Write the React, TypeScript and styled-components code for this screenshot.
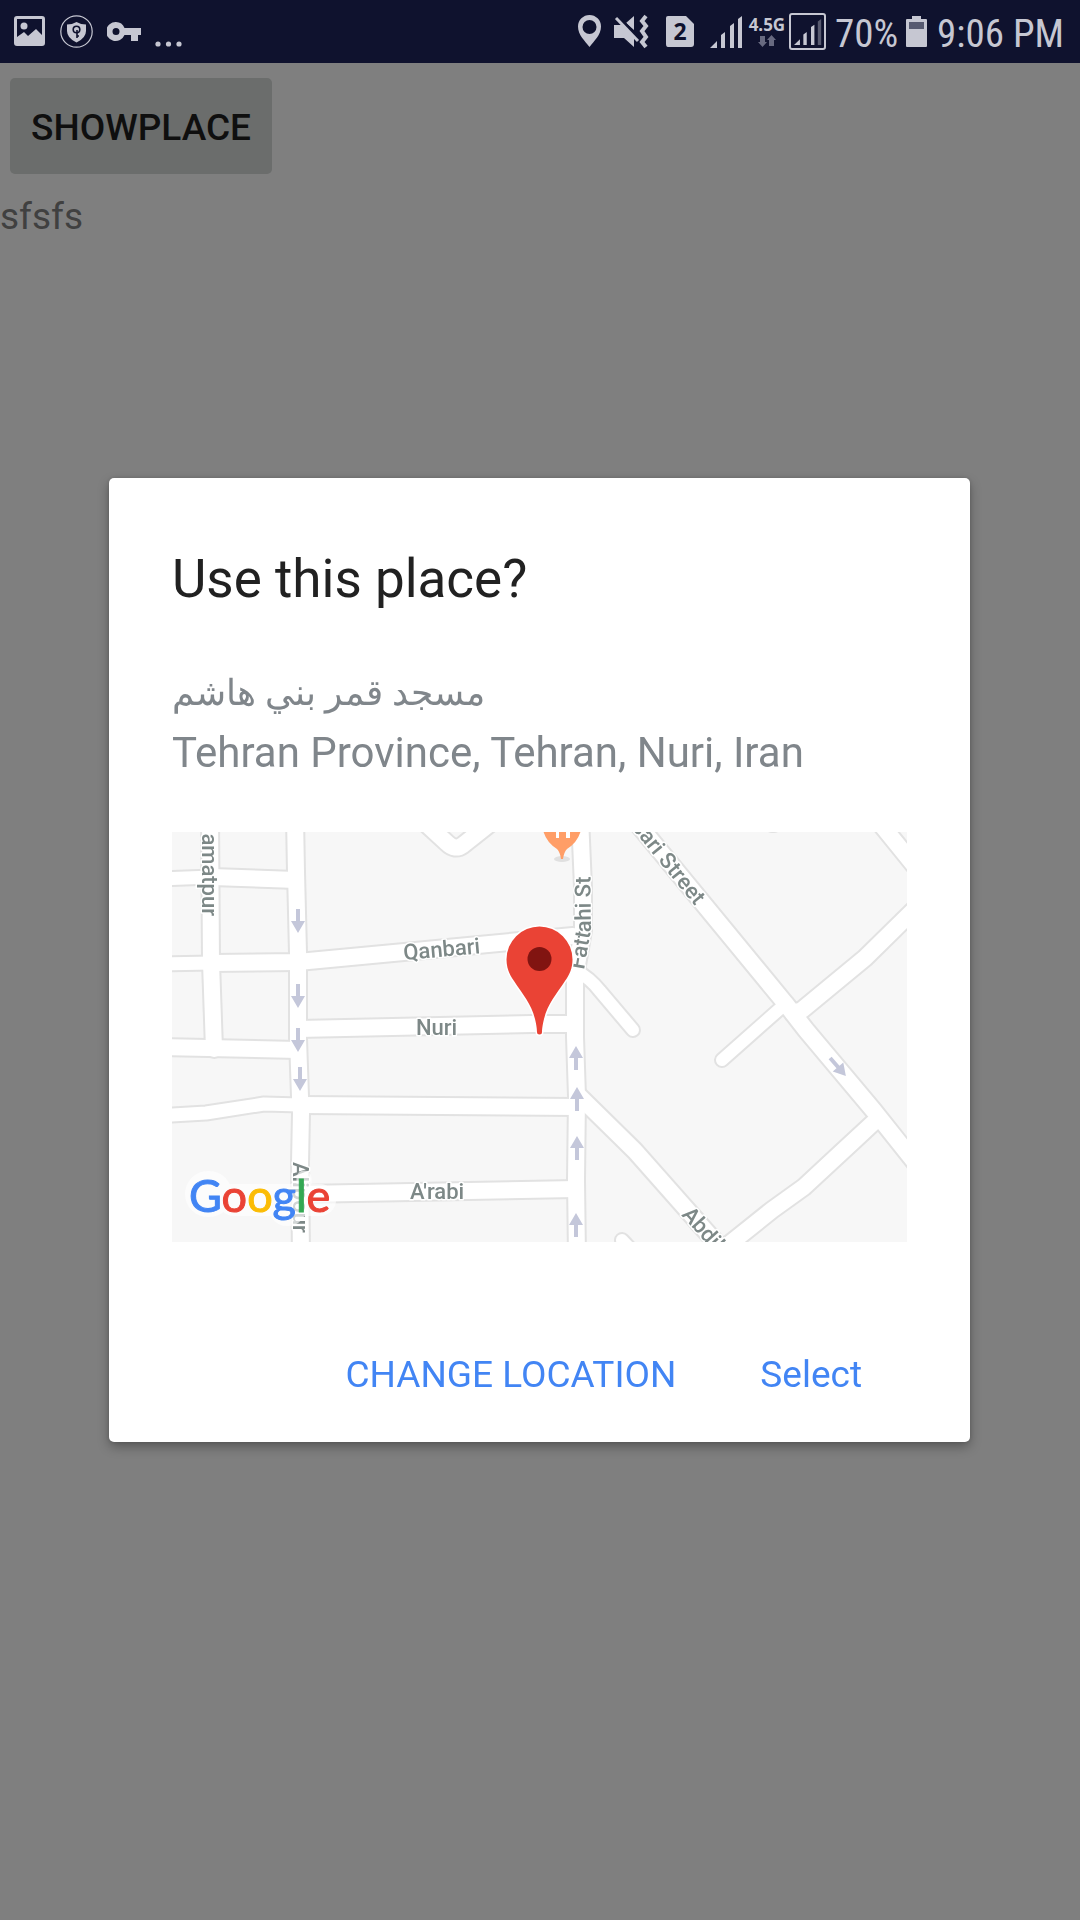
import React from "react";
import styled, { createGlobalStyle } from "styled-components";

const GlobalStyle = createGlobalStyle`
  *, *::before, *::after { box-sizing: border-box; }
  body {
    margin: 0;
    background: #7f7f7f;
    font-family: Roboto, "Noto Sans", sans-serif;
  }
`;

const Screen = styled.div`
  min-height: 100vh;
  display: flex;
  flex-direction: column;
  background: #7f7f7f;
`;

const StatusBar = styled.header`
  height: 63px;
  padding: 0 16px 0 14px;
  display: flex;
  align-items: center;
  justify-content: space-between;
  background: #0f122e;
  color: #c6c7d2;
`;

const StatusGroup = styled.div<{ $gap?: number }>`
  display: flex;
  align-items: center;
  gap: ${(p) => p.$gap ?? 0}px;
`;

const StatusIcon = styled.svg`
  display: block;
  flex: none;
  height: 63px;
  fill: #c6c7d2;
`;

const StatusText = styled.span`
  padding-top: 4px;
  font-family: "Roboto Condensed", Roboto, sans-serif;
  font-size: 39px;
  line-height: 46px;
  white-space: nowrap;
`;

const Network = styled.div`
  width: 38px;
  display: flex;
  flex-direction: column;
  align-items: center;
  font: 700 17px/20px "Noto Sans", sans-serif;
`;

const Content = styled.main`
  display: flex;
  flex-direction: column;
  align-items: flex-start;
  gap: 21px;
  padding-top: 15px;
`;

const PlaceButton = styled.button`
  margin-left: 10px;
  height: 96px;
  padding: 3px 21px 0;
  border: 0;
  border-radius: 5px;
  background: #6b6d6c;
  color: #0f0f0f;
  font: 500 37px/44px Roboto, sans-serif;
`;

const Note = styled.p`
  margin: 0;
  color: #404040;
  font-size: 37px;
  line-height: 44px;
`;

const Overlay = styled.div`
  position: fixed;
  inset: 0;
  display: flex;
  align-items: center;
  padding: 0 110px 0 109px;
`;

const Dialog = styled.section`
  flex: 1;
  padding: 70px 63px 20px;
  border-radius: 5px;
  background: #fff;
  box-shadow: 0 5px 12px rgba(0, 0, 0, 0.3), 0 0 4px rgba(0, 0, 0, 0.15);
`;

const Title = styled.h1`
  margin: 0 0 48px;
  color: #212121;
  font-size: 53px;
  font-weight: 400;
  line-height: 62px;
`;

const Address = styled.p`
  margin: 0;
  height: 63px;
  color: #80868b;
  font-size: 42px;
  line-height: 63px;
  white-space: nowrap;
`;

const PlaceName = styled(Address)`
  font-size: 36px;
  line-height: 70px;
`;

const MapView = styled.svg`
  display: block;
  width: 100%;
  margin-top: 48px;
  background: #f7f7f7;
`;

const RoadGroup = styled.g`
  fill: none;
  stroke-linejoin: round;
  stroke-linecap: round;
`;

const StreetName = styled.text`
  font: 500 22px Roboto, sans-serif;
  fill: #7d8887;
  stroke: #fff;
  stroke-width: 3px;
  stroke-linejoin: round;
  paint-order: stroke;
`;

const Wordmark = styled.text`
  font: 400 45px Lato, sans-serif;
`;

const Actions = styled.div`
  display: flex;
  justify-content: flex-end;
  margin-top: 86px;
  padding-right: 3px;
`;

const ActionButton = styled.button`
  height: 94px;
  padding: 0 42px;
  border: 0;
  background: transparent;
  color: #4285f4;
  font: 400 37px/44px Roboto, sans-serif;
`;

const roads: { d: string; w: number }[] = [
  { d: "M38 -15 L39 130 L42 217", w: 18 },
  { d: "M123 -15 L124 40 L126 121 L126 206 L128 265 L129 281 L128 331 L129 425", w: 18 },
  { d: "M-15 47 L40 45", w: 15 },
  { d: "M40 45 L124 48", w: 18 },
  { d: "M-15 132 L40 131", w: 15 },
  { d: "M40 131 L126 130 L401 104", w: 18 },
  { d: "M-15 215 L126 218", w: 18 },
  { d: "M126 197 L360 192 L403 192", w: 18 },
  { d: "M-15 284 L34 281 L92 272 L128 273", w: 15 },
  { d: "M128 273 L405 275", w: 18 },
  { d: "M128 362 L404 357", w: 18 },
  { d: "M408 -15 L411 55 L411 98 L403 145 L403 205 L405 265 L404 348 L405 425", w: 18 },
  { d: "M403 138 Q418 146 428 159 L461 198", w: 14 },
  { d: "M460 -15 L613 171 L634 198 L702 279 L745 333", w: 18 },
  { d: "M750 70 L693 126 L630 178 L621 181", w: 18 },
  { d: "M611 174 L550 228", w: 14 },
  { d: "M701 291 L632 355 L600 378 L550 418", w: 18 },
  { d: "M405 262 L463 319 L555 423", w: 18 },
  { d: "M250 -12 L275 11 Q283 19 291 13 L320 -10", w: 18 },
  { d: "M703 -15 L750 43", w: 18 },
  { d: "M450 408 L465 424", w: 14 },
  { d: "M600 -7 L602 -7", w: 14 },
];

const arrows = [
  [126, 89, 0],
  [126, 164, 0],
  [126, 208, 0],
  [128, 247, 0],
  [404, 226, 180],
  [405, 267, 180],
  [405, 316, 180],
  [404, 393, 180],
  [666, 235, -41],
];

function StreetMap() {
  return (
    <MapView viewBox="0 0 735 410" role="img" aria-label="Map of the selected place">
      <defs>
        <path id="fattahi" d="M412 138 L419 98 L418 20" />
      </defs>
      <RoadGroup stroke="#e2e2e2">
        {roads.map((r) => (
          <path key={r.d} d={r.d} strokeWidth={r.w + 2} />
        ))}
      </RoadGroup>
      <RoadGroup stroke="#fff">
        {roads.map((r) => (
          <path key={r.d} d={r.d} strokeWidth={r.w - 2} />
        ))}
      </RoadGroup>
      {arrows.map(([x, y, angle]) => (
        <path
          key={`${x}-${y}`}
          d="M-2 -12 H2 V0 H7 L0 12 L-7 0 H-2 Z"
          fill="#c4c7da"
          transform={`translate(${x} ${y}) rotate(${angle})`}
        />
      ))}

      <StreetName transform="translate(30 84) rotate(90)" textAnchor="end">amatpur</StreetName>
      <StreetName transform="translate(232 128) rotate(-5)">Qanbari</StreetName>
      <StreetName x="244" y="203">Nuri</StreetName>
      <StreetName x="238" y="367">A'rabi</StreetName>
      <StreetName transform="translate(121 330) rotate(90)">Alipour</StreetName>
      <StreetName>
        <textPath href="#fattahi">Fattahi St</textPath>
      </StreetName>
      <StreetName transform="translate(523 74) rotate(51)" textAnchor="end">sari Street</StreetName>
      <StreetName transform="translate(509 383) rotate(48)">Abdili</StreetName>

      <ellipse cx="390" cy="27" rx="8" ry="3" fill="#e0e0e0" />
      <path d="M371 -2 Q374 10 385 17 Q388 20 389 27 H391 Q392 20 395 17 Q406 10 409 -2 Z" fill="#ff9e67" />
      <path d="M384 0 H387 V6 H384 Z M394 0 H398 V6 H394 Z" fill="#fff" />

      <path
        d="M334.500 127.500 A33 33 0 0 1 400.500 127.500 C400.500 136 397.500 143 393 149 C384 163 376 171 372 187 C370.500 193 370 198 370 200 A2.500 2.500 0 0 1 365 200 C365 198 364.500 193 363 187 C359 171 351 163 342 149 C337.500 143 334.500 136 334.500 127.500 Z"
        fill="#ea4335"
        stroke="#fff"
        strokeWidth="3"
        paintOrder="stroke"
      />
      <circle cx="367.500" cy="127" r="12" fill="#811411" />

      <g fill="none" stroke="#fff" strokeLinecap="round" opacity="0.65">
        <path d="M36 362 H37" strokeWidth="46" />
        <path d="M62 368 H148" strokeWidth="32" />
        <path d="M115 376 H116" strokeWidth="36" />
        <path d="M132 346 V376" strokeWidth="15" />
      </g>
      <Wordmark x="17" y="380">
        <tspan fill="#4285f4" stroke="#4285f4">G</tspan>
        <tspan fill="#ea4335" stroke="#ea4335">o</tspan>
        <tspan fill="#fbbc05" stroke="#fbbc05">o</tspan>
        <tspan fill="#4285f4" stroke="#4285f4">g</tspan>
        <tspan fill="#34a853" stroke="#34a853">l</tspan>
        <tspan fill="#ea4335" stroke="#ea4335">e</tspan>
      </Wordmark>
    </MapView>
  );
}

function SignalBars({ faded }: { faded?: boolean }) {
  return (
    <>
      <path d="M0 32 L7 25 V32 Z M11 32 V19 L15 16 V32 Z M20 32 V10 L24 7 V32 Z" />
      <path d="M28 32 V3 L32 0 V32 Z" opacity={faded ? 0.4 : 1} />
    </>
  );
}

function PhoneStatus() {
  return (
    <StatusBar>
      <StatusGroup $gap={14}>
        <StatusIcon width="32" viewBox="0 0 32 63">
          <path
            fillRule="evenodd"
            d="M3 16 H28 Q31 16 31 19 V43 Q31 46 28 46 H3 Q0 46 0 43 V19 Q0 16 3 16 Z M3 19 V37 L10 32 L14 36 L22 29 L28 35 V19 Z"
          />
          <circle cx="10" cy="26" r="3.500" />
        </StatusIcon>
        <StatusIcon width="33" viewBox="0 0 33 63">
          <circle cx="16.500" cy="31.500" r="15.700" fill="none" stroke="#c6c7d2" strokeWidth="1.200" />
          <path d="M16.500 22 Q21 24.500 26 24.500 V31 Q26 38 16.500 42.500 Q7 38 7 31 V24.500 Q12 24.500 16.500 22 Z" />
          <g fill="none" stroke="#0f122e" strokeWidth="1.600">
            <circle cx="16.500" cy="29.500" r="3.300" />
            <path d="M17 30 V38 M17 36 H19" />
          </g>
        </StatusIcon>
        <StatusIcon width="34" viewBox="0 0 34 63">
          <path
            fillRule="evenodd"
            d="M9 22 A9.500 9.500 0 0 1 17.500 28 H34 V35 H31 V41 H24 V35 H17.500 A9.500 9.500 0 1 1 9 22 Z M9 28 A3.500 3.500 0 1 0 9 35 A3.500 3.500 0 1 0 9 28 Z"
          />
        </StatusIcon>
        <StatusIcon width="27" viewBox="0 0 27 63">
          <circle cx="3" cy="44" r="2.600" />
          <circle cx="13.500" cy="44" r="2.600" />
          <circle cx="24" cy="44" r="2.600" />
        </StatusIcon>
      </StatusGroup>

      <StatusGroup>
        <StatusIcon width="30" viewBox="0 0 30 63">
          <path
            fillRule="evenodd"
            d="M14.500 15 A11.500 11.500 0 0 1 26 26.500 C26 35 19 41 14.500 47 C10 41 3 35 3 26.500 A11.500 11.500 0 0 1 14.500 15 Z M14.500 20 A7 7 0 1 0 14.500 34 A7 7 0 1 0 14.500 20 Z"
          />
        </StatusIcon>
        <StatusIcon width="50" viewBox="0 0 50 63">
          <path d="M9 25 H17 L29 37 V47 L19 38 H9 Z M29 16 V30 L21 23 Z" />
          <path d="M14 17 L33 38" fill="none" stroke="#0f122e" strokeWidth="3" />
          <path d="M11 18 L33 41" fill="none" stroke="#c6c7d2" strokeWidth="3" />
          <path
            d="M41 16 L37 21 L41 26 L37 31 L41 37 L37 42 L41 47"
            fill="none"
            stroke="#c6c7d2"
            strokeWidth="4"
          />
        </StatusIcon>
        <StatusIcon width="48" viewBox="0 0 48 63">
          <path d="M13 16 H31 L39 24 V44 Q39 47 36 47 H13 Q11 47 11 44 V18 Q11 16 13 16 Z" />
          <text x="25" y="40" textAnchor="middle" fontFamily="Noto Sans" fontWeight="700" fontSize="23" fill="#0f122e">
            2
          </text>
        </StatusIcon>
        <StatusIcon width="45" viewBox="0 0 45 63">
          <g transform="translate(7 16)">
            <SignalBars />
          </g>
        </StatusIcon>
        <Network>
          <span>4.5G</span>
          <svg width="20" height="13" viewBox="0 0 20 13" fill="#686a80">
            <path d="M3 1 H8 V7 H10 L5.500 12 L1 7 H3 Z M12 11 H17 V5 H19 L14.500 0 L10 5 H12 Z" />
          </svg>
        </Network>
        <StatusIcon width="49" viewBox="0 0 49 63">
          <rect x="4" y="14" width="35" height="35" rx="2" fill="none" stroke="#c6c7d2" strokeWidth="2" />
          <g transform="translate(8 19) scale(0.850 0.810)">
            <SignalBars faded />
          </g>
        </StatusIcon>
        <StatusText>70%</StatusText>
        <StatusIcon width="39" viewBox="0 0 39 63">
          <path d="M14 16 H23 V19 H28 Q29 19 29 20 V46 Q29 47 28 47 H9 Q8 47 8 46 V20 Q8 19 9 19 H14 Z" />
          <rect x="11" y="22" width="15" height="7" fill="#575a70" />
        </StatusIcon>
        <StatusText>9:06 PM</StatusText>
      </StatusGroup>
    </StatusBar>
  );
}

export default function App() {
  return (
    <>
      <GlobalStyle />
      <Screen>
        <PhoneStatus />
        <Content>
          <PlaceButton type="button">SHOWPLACE</PlaceButton>
          <Note>sfsfs</Note>
        </Content>
      </Screen>
      <Overlay>
        <Dialog role="dialog" aria-modal="true" aria-labelledby="dialog-title">
          <Title id="dialog-title">Use this place?</Title>
          <PlaceName lang="fa">مسجد قمر بني هاشم</PlaceName>
          <Address>Tehran Province, Tehran, Nuri, Iran</Address>
          <StreetMap />
          <Actions>
            <ActionButton type="button">CHANGE LOCATION</ActionButton>
            <ActionButton type="button">Select</ActionButton>
          </Actions>
        </Dialog>
      </Overlay>
    </>
  );
}
